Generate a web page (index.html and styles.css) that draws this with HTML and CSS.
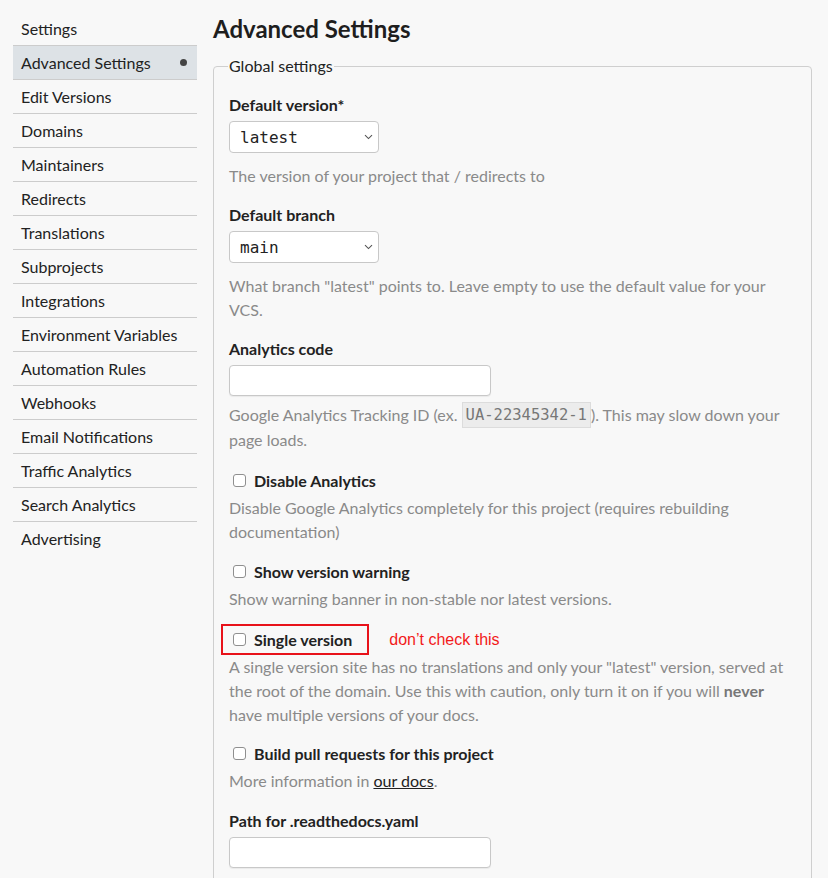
FILE: index.html
```html
<!DOCTYPE html>
<html>
<head>
<meta charset="utf-8">
<link rel="stylesheet" href="styles.css">
</head>
<body>
<div class="page">
  <nav class="sidebar">
    <a class="nav-item">Settings</a>
    <a class="nav-item active">Advanced Settings<span class="dot"></span></a>
    <a class="nav-item">Edit Versions</a>
    <a class="nav-item">Domains</a>
    <a class="nav-item">Maintainers</a>
    <a class="nav-item">Redirects</a>
    <a class="nav-item">Translations</a>
    <a class="nav-item">Subprojects</a>
    <a class="nav-item">Integrations</a>
    <a class="nav-item">Environment Variables</a>
    <a class="nav-item">Automation Rules</a>
    <a class="nav-item">Webhooks</a>
    <a class="nav-item">Email Notifications</a>
    <a class="nav-item">Traffic Analytics</a>
    <a class="nav-item">Search Analytics</a>
    <a class="nav-item">Advertising</a>
  </nav>
  <main class="main">
    <h1 class="title">Advanced Settings</h1>
    <fieldset class="group">
      <legend class="group-legend">Global settings</legend>

      <div class="field">
        <label class="label">Default version*</label>
        <div class="select"><span class="select-value">latest</span>
          <svg class="chevron" width="9" height="6" viewBox="0 0 9 6"><path d="M1 1.2 L4.5 4.6 L8 1.2" fill="none" stroke="#555" stroke-width="1.1"/></svg>
        </div>
        <p class="help">The version of your project that / redirects to</p>
      </div>

      <div class="field">
        <label class="label">Default branch</label>
        <div class="select"><span class="select-value">main</span>
          <svg class="chevron" width="9" height="6" viewBox="0 0 9 6"><path d="M1 1.2 L4.5 4.6 L8 1.2" fill="none" stroke="#555" stroke-width="1.1"/></svg>
        </div>
        <p class="help">What branch "latest" points to. Leave empty to use the default value for your VCS.</p>
      </div>

      <div class="field field-wide">
        <label class="label">Analytics code</label>
        <div class="input"></div>
        <p class="help help-tight">Google Analytics Tracking ID (ex. <code class="code">UA-22345342-1</code>). This may slow down your page loads.</p>
      </div>

      <div class="field">
        <div class="check-row"><span class="checkbox"></span><span class="check-label">Disable Analytics</span></div>
        <p class="help help-check">Disable Google Analytics completely for this project (requires rebuilding documentation)</p>
      </div>

      <div class="field">
        <div class="check-row"><span class="checkbox"></span><span class="check-label">Show version warning</span></div>
        <p class="help help-check">Show warning banner in non-stable nor latest versions.</p>
      </div>

      <div class="field field-narrow">
        <div class="annotated">
          <div class="check-row highlight"><span class="checkbox"></span><span class="check-label">Single version</span></div>
          <span class="note">don’t check this</span>
        </div>
        <p class="help help-flush">A single version site has no translations and only your "latest" version, served at the root of the domain. Use this with caution, only turn it on if you will <strong>never</strong> have multiple versions of your docs.</p>
      </div>

      <div class="field field-wide">
        <div class="check-row"><span class="checkbox"></span><span class="check-label">Build pull requests for this project</span></div>
        <p class="help help-check">More information in <a class="link">our docs</a>.</p>
      </div>

      <div class="field">
        <label class="label">Path for .readthedocs.yaml</label>
        <div class="input"></div>
      </div>
    </fieldset>
  </main>
</div>
</body>
</html>
```

FILE: styles.css
```css
html, body {
  margin: 0;
  padding: 0;
  background: #f8f8f8;
}
body {
  font-family: Lato, "Open Sans", sans-serif;
  color: #222;
  font-size: 16px;
}
.page {
  display: flex;
  gap: 16px;
  padding: 12px 0 0 13px;
  align-items: flex-start;
}
.sidebar {
  width: 184px;
  flex: none;
  display: flex;
  flex-direction: column;
}
.nav-item {
  display: flex;
  align-items: center;
  justify-content: space-between;
  height: 33px;
  padding: 0 10px 0 8px;
  border-bottom: 1px solid #ccc;
  color: #222;
  font-size: 16px;
  line-height: 33px;
}
.nav-item:last-child {
  border-bottom: none;
}
.nav-item.active {
  background: #dde2e6;
}
.dot {
  width: 7px;
  height: 7px;
  border-radius: 50%;
  background: #444;
}
.main {
  flex: 1;
  max-width: 599px;
}
.title {
  margin: 0;
  font-size: 24px;
  font-weight: 700;
  line-height: 30px;
  padding-top: 2px;
  color: #1e1e1e;
}
.group {
  margin: 12px 0 0 0;
  border: 1px solid #cfcfcf;
  border-radius: 4px;
  padding: 17px 16px 40px 15px;
}
.group-legend {
  padding: 0 1px;
  margin-left: -1px;
  font-size: 16px;
  line-height: 20px;
  color: #222;
}
.field {
  margin-bottom: 15px;
}
.field-wide {
  margin-bottom: 16px;
}
.field-narrow {
  margin-bottom: 14px;
}
.label {
  display: block;
  font-weight: 700;
  font-size: 16px;
  line-height: 24px;
  margin-bottom: 4px;
  color: #222;
}
.select {
  display: flex;
  align-items: center;
  justify-content: space-between;
  width: 148px;
  height: 30px;
  border: 1px solid #c8c8c8;
  border-radius: 4px;
  background: #fff;
}
.select-value {
  font-family: "DejaVu Sans Mono", monospace;
  font-size: 16px;
  padding-left: 10px;
  color: #222;
}
.chevron {
  margin-right: 5px;
}
.input {
  width: 260px;
  height: 29px;
  border: 1px solid #c8c8c8;
  border-radius: 4px;
  background: #fff;
  box-shadow: 0 1px 1px rgba(0,0,0,0.06);
}
.help {
  margin: 11px 0 0 0;
  font-size: 16px;
  line-height: 24px;
  color: #8a8a8a;
}
.help-tight {
  margin-top: 7px;
}
.help-check {
  margin-top: 4px;
}
.help-flush {
  margin-top: 0;
}
.help strong {
  color: #777;
  font-weight: 700;
}
.code {
  display: inline-block;
  font-family: "DejaVu Sans Mono", monospace;
  font-size: 15.5px;
  line-height: 24px;
  background: #ececec;
  border: 1px solid #dcdcdc;
  padding: 0 3px;
  color: #777;
  vertical-align: top;
  margin-top: -1px;
}
.link {
  color: #222;
  text-decoration: underline;
}
.check-row {
  display: flex;
  align-items: center;
  gap: 8px;
  height: 24px;
  padding-left: 4px;
}
.checkbox {
  width: 11px;
  height: 11px;
  border: 1px solid #8f8f8f;
  border-radius: 3px;
  background: #fff;
}
.check-label {
  font-weight: 700;
  font-size: 16px;
  color: #222;
}
.annotated {
  display: flex;
  align-items: center;
  gap: 20px;
  margin: -2px 0 0 -8px;
}
.highlight {
  border: 2px solid #e8121a;
  height: 27px;
  padding: 0 15px 0 10px;
}
.note {
  font-family: "Liberation Sans", Arial, sans-serif;
  font-size: 16px;
  color: #f21a1a;
}
```
